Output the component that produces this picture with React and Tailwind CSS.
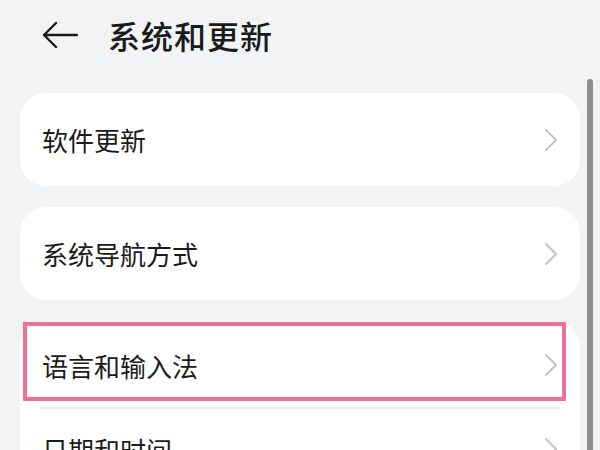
export default function App() {
  const font = { fontFamily: '"Noto Sans CJK SC", "Noto Sans", sans-serif' };

  const chevron = (
    <svg width="14" height="24" viewBox="0 0 14 24" fill="none" stroke="#c4c4c4" strokeWidth="2" strokeLinecap="round" strokeLinejoin="round" className="shrink-0">
      <path d="M2 2l10 10-10 10" />
    </svg>
  );

  return (
    <div className="relative w-[600px] h-[450px] overflow-hidden bg-[#f1f3f5]" style={font}>
      {/* Header */}
      <div className="flex items-center h-[70px] pl-[42px]">
        <svg width="36" height="28" viewBox="0 0 36 28" fill="none" stroke="#1b1b1b" strokeWidth="2.4" strokeLinecap="round" strokeLinejoin="round">
          <path d="M2 14h33M14 2L2 14l12 12" />
        </svg>
        <h1 className="ml-[30px] text-[32px] leading-none font-medium text-[#1b1b1b] tracking-[1px]">系统和更新</h1>
      </div>

      <div className="flex flex-col gap-[21px] px-[20px] pt-[23px]">
        <div className="flex items-center justify-between h-[93px] bg-white rounded-[26px] pl-[22px] pr-[22px]">
          <span className="text-[26px] text-[#1b1b1b]">软件更新</span>
          {chevron}
        </div>

        <div className="flex items-center justify-between h-[93px] bg-white rounded-[26px] pl-[22px] pr-[22px]">
          <span className="text-[26px] text-[#1b1b1b]">系统导航方式</span>
          {chevron}
        </div>

        <div className="bg-white rounded-[26px]">
          <div className="relative flex items-center justify-between h-[86px] pt-[2px] pl-[22px] pr-[22px]">
            <span className="text-[26px] text-[#1b1b1b]">语言和输入法</span>
            {chevron}
            <div className="absolute left-[3px] top-[1px] w-[543px] h-[79px] border-[4.5px] border-[#f26e94]" />
          </div>
          <div className="mx-[20px] h-[2px] bg-[#ececec]" />
          <div className="flex items-center justify-between h-[80px] pl-[22px] pr-[22px]">
            <span className="text-[26px] text-[#1b1b1b]">日期和时间</span>
            {chevron}
          </div>
        </div>
      </div>

      {/* Scrollbar */}
      <div className="absolute left-[587px] top-[79px] w-[6px] h-[380px] rounded-full bg-[#8e8e8e]" />
    </div>
  );
}
